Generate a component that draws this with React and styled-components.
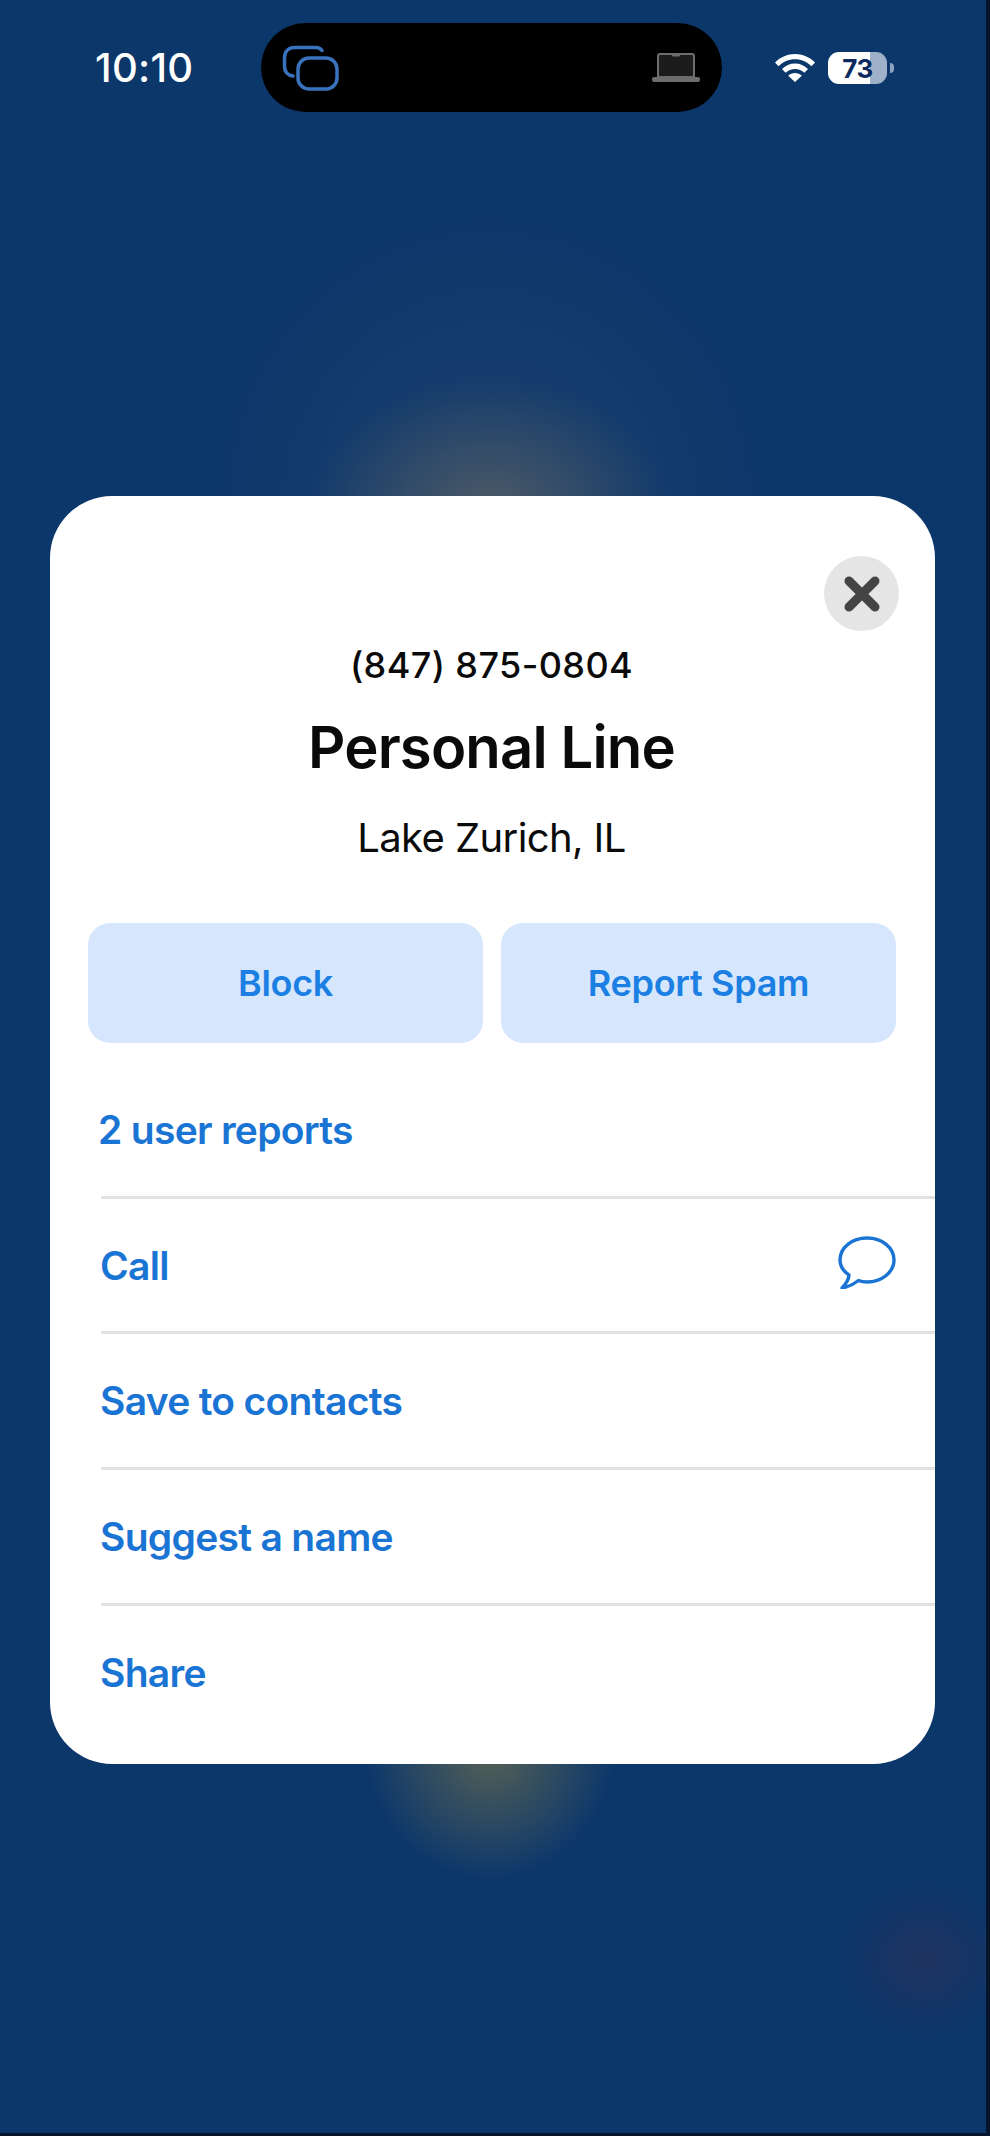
import React from "react";
import styled, { createGlobalStyle } from "styled-components";

const GlobalStyle = createGlobalStyle`
  html, body {
    margin: 0;
    padding: 0;
    background: #06142c;
  }
  * {
    box-sizing: border-box;
  }
`;

const Screen = styled.div`
  width: 986px;
  height: 2133px;
  overflow: hidden;
  font-family: Inter, "Liberation Sans", sans-serif;
  background:
    radial-gradient(ellipse 180px 130px at 490px 510px, rgba(125, 115, 95, 0.5), rgba(125, 115, 95, 0) 100%),
    radial-gradient(ellipse 300px 320px at 490px 510px, rgba(90, 100, 115, 0.2), rgba(90, 100, 115, 0) 100%),
    radial-gradient(ellipse 125px 130px at 490px 1750px, rgba(135, 125, 70, 0.6), rgba(135, 125, 70, 0) 100%),
    radial-gradient(ellipse 90px 80px at 925px 1960px, rgba(60, 45, 80, 0.4), rgba(60, 45, 80, 0) 100%),
    #0c376b;
`;

const StatusBar = styled.div`
  display: flex;
  align-items: flex-start;
  height: 496px;
  padding: 23px 0 0 95px;
`;

const Clock = styled.div`
  width: 166px;
  margin-top: 23px;
  font-size: 40px;
  line-height: 44px;
  font-weight: 500;
  letter-spacing: 0.3px;
  color: #fff;
`;

const Island = styled.div`
  display: flex;
  align-items: center;
  justify-content: space-between;
  width: 461px;
  height: 89px;
  padding: 0 22px 0 21px;
  border-radius: 45px;
  background: #000;
`;

const StatusIcons = styled.div`
  display: flex;
  align-items: center;
  gap: 13px;
  margin: 29px 0 0 53px;
`;

const Battery = styled.div`
  position: relative;
  display: flex;
  align-items: center;
  justify-content: center;
  width: 59px;
  height: 32px;
  border-radius: 11px;
  font-size: 26px;
  font-weight: 700;
  letter-spacing: -0.5px;
  color: #0c2a5e;
  background: linear-gradient(90deg, #fff 0, #fff 72%, #9fb1c9 72%, #9fb1c9 100%);

  &::after {
    content: "";
    position: absolute;
    right: -7px;
    top: 11px;
    width: 4px;
    height: 10px;
    border-radius: 0 5px 5px 0;
    background: #8fa4c0;
  }
`;

const Card = styled.section`
  width: 885px;
  height: 1268px;
  margin-left: 50px;
  border-radius: 62px;
  background: #fff;
  overflow: hidden;
`;

const CloseRow = styled.div`
  display: flex;
  justify-content: flex-end;
  padding: 60px 36px 0 0;
`;

const CloseButton = styled.button`
  display: flex;
  align-items: center;
  justify-content: center;
  width: 75px;
  height: 75px;
  padding: 0;
  border: 0;
  border-radius: 50%;
  background: #e5e5e5;
`;

const Header = styled.div`
  display: flex;
  flex-direction: column;
  align-items: center;
  margin-left: -2px;
`;

const Phone = styled.div`
  margin-top: 12px;
  font-size: 36px;
  line-height: 44px;
  font-weight: 500;
  letter-spacing: 0.4px;
  color: #0a0a0a;
`;

const Title = styled.h1`
  margin: 27px 0 0;
  font-size: 58px;
  line-height: 66px;
  font-weight: 600;
  letter-spacing: -0.85px;
  color: #0a0a0a;
`;

const Location = styled.div`
  margin-top: 35px;
  font-size: 40px;
  line-height: 46px;
  font-weight: 400;
  letter-spacing: -0.6px;
  color: #0a0a0a;
`;

const Actions = styled.div`
  display: grid;
  grid-template-columns: 395px 395px;
  gap: 18px;
  margin: 62px 0 0 38px;
`;

const ActionButton = styled.button`
  height: 120px;
  border: 0;
  border-radius: 22px;
  font-family: inherit;
  font-size: 36px;
  font-weight: 600;
  letter-spacing: -0.3px;
  color: #1b7fe3;
  background: #d6e7fd;
`;

const List = styled.div`
  margin-top: 20px;
`;

const Row = styled.div`
  display: flex;
  align-items: center;
  justify-content: space-between;
  height: ${(p) => p.$height || 136}px;
  margin-left: 51px;
  padding-right: 39px;
  border-bottom: ${(p) => (p.$last ? "0" : "3px solid #e2e2e2")};
  font-size: 39px;
  font-weight: 600;
  letter-spacing: -0.7px;
  color: #1a74d3;
`;

const Label = styled.span`
  margin-left: ${(p) => p.$shift || -1}px;
`;

const BubbleWrap = styled.span`
  display: flex;
  margin-top: -6px;
`;

function WindowsIcon() {
  return (
    <svg width="58" height="46" viewBox="0 0 58 46" fill="none" stroke="#3a73bd" strokeWidth="3.5">
      <path d="M40 5.500C38.500 3.500 37 2.500 34 2.500H13C6.500 2.500 2.500 6.500 2.500 13V21C2.500 27 6 30.500 11 31" strokeLinecap="round" />
      <rect x="16" y="13" width="39" height="31" rx="11" />
    </svg>
  );
}

function LaptopIcon() {
  return (
    <svg width="48" height="30" viewBox="0 0 48 30">
      <path d="M6 2.500A2 2 0 0 1 8 1h32a2 2 0 0 1 2 1.500V24H6Z" fill="#1c1c1c" stroke="#6d6d6d" strokeWidth="2" />
      <path d="M20 1h8v1.500a1 1 0 0 1-1 1h-6a1 1 0 0 1-1-1Z" fill="#6d6d6d" />
      <rect x="0" y="24" width="48" height="5" rx="2" fill="#6d6d6d" />
    </svg>
  );
}

function WifiIcon() {
  return (
    <svg width="40" height="28" viewBox="0 0 40 28" fill="#fff">
      <path d="M20 0C12.500 0 5.500 3 0 8.500l3.500 3.800C8 7.800 13.800 5.300 20 5.300s12 2.500 16.500 7L40 8.500C34.500 3 27.500 0 20 0Z" />
      <path d="M20 9.500c-5 0-9.500 2-13 5.500l3.600 3.800C13.100 16.400 16.400 15 20 15s6.900 1.400 9.400 3.800L33 15c-3.500-3.500-8-5.500-13-5.500Z" />
      <path d="M20 19c-2.600 0-5 1-6.800 2.800L20 28l6.800-6.200C25 20 22.600 19 20 19Z" />
    </svg>
  );
}

function CloseIcon() {
  return (
    <svg width="38" height="38" viewBox="0 0 38 38" stroke="#444" strokeWidth="9" strokeLinecap="round">
      <path d="M6 6 32 32M32 6 6 32" />
    </svg>
  );
}

function BubbleIcon() {
  return (
    <svg width="58" height="53" viewBox="0 0 58 53" fill="none" stroke="#1a74d3" strokeWidth="3.400" strokeLinejoin="round">
      <path d="M11 39C5 35 2 30 2 24C2 11.500 14 2 29 2C44 2 56 11.500 56 24C56 36 44 46 29 46C26 46 23 45.500 20.500 44.500C16 48 10 51 4 52C8 48 10.500 44 11 39Z" />
    </svg>
  );
}

function App() {
  return (
    <>
      <GlobalStyle />
      <Screen>
        <StatusBar>
          <Clock>10:10</Clock>
          <Island>
            <WindowsIcon />
            <LaptopIcon />
          </Island>
          <StatusIcons>
            <WifiIcon />
            <Battery>73</Battery>
          </StatusIcons>
        </StatusBar>
        <Card>
          <CloseRow>
            <CloseButton aria-label="Close">
              <CloseIcon />
            </CloseButton>
          </CloseRow>
          <Header>
            <Phone>(847) 875-0804</Phone>
            <Title>Personal Line</Title>
            <Location>Lake Zurich, IL</Location>
          </Header>
          <Actions>
            <ActionButton>Block</ActionButton>
            <ActionButton>Report Spam</ActionButton>
          </Actions>
          <List>
            <Row>
              <Label $shift={-3}>2 user reports</Label>
            </Row>
            <Row $height={135}>
              <Label>Call</Label>
              <BubbleWrap>
                <BubbleIcon />
              </BubbleWrap>
            </Row>
            <Row>
              <Label>Save to contacts</Label>
            </Row>
            <Row>
              <Label>Suggest a name</Label>
            </Row>
            <Row $last $height={132}>
              <Label>Share</Label>
            </Row>
          </List>
        </Card>
      </Screen>
    </>
  );
}

export default App;
